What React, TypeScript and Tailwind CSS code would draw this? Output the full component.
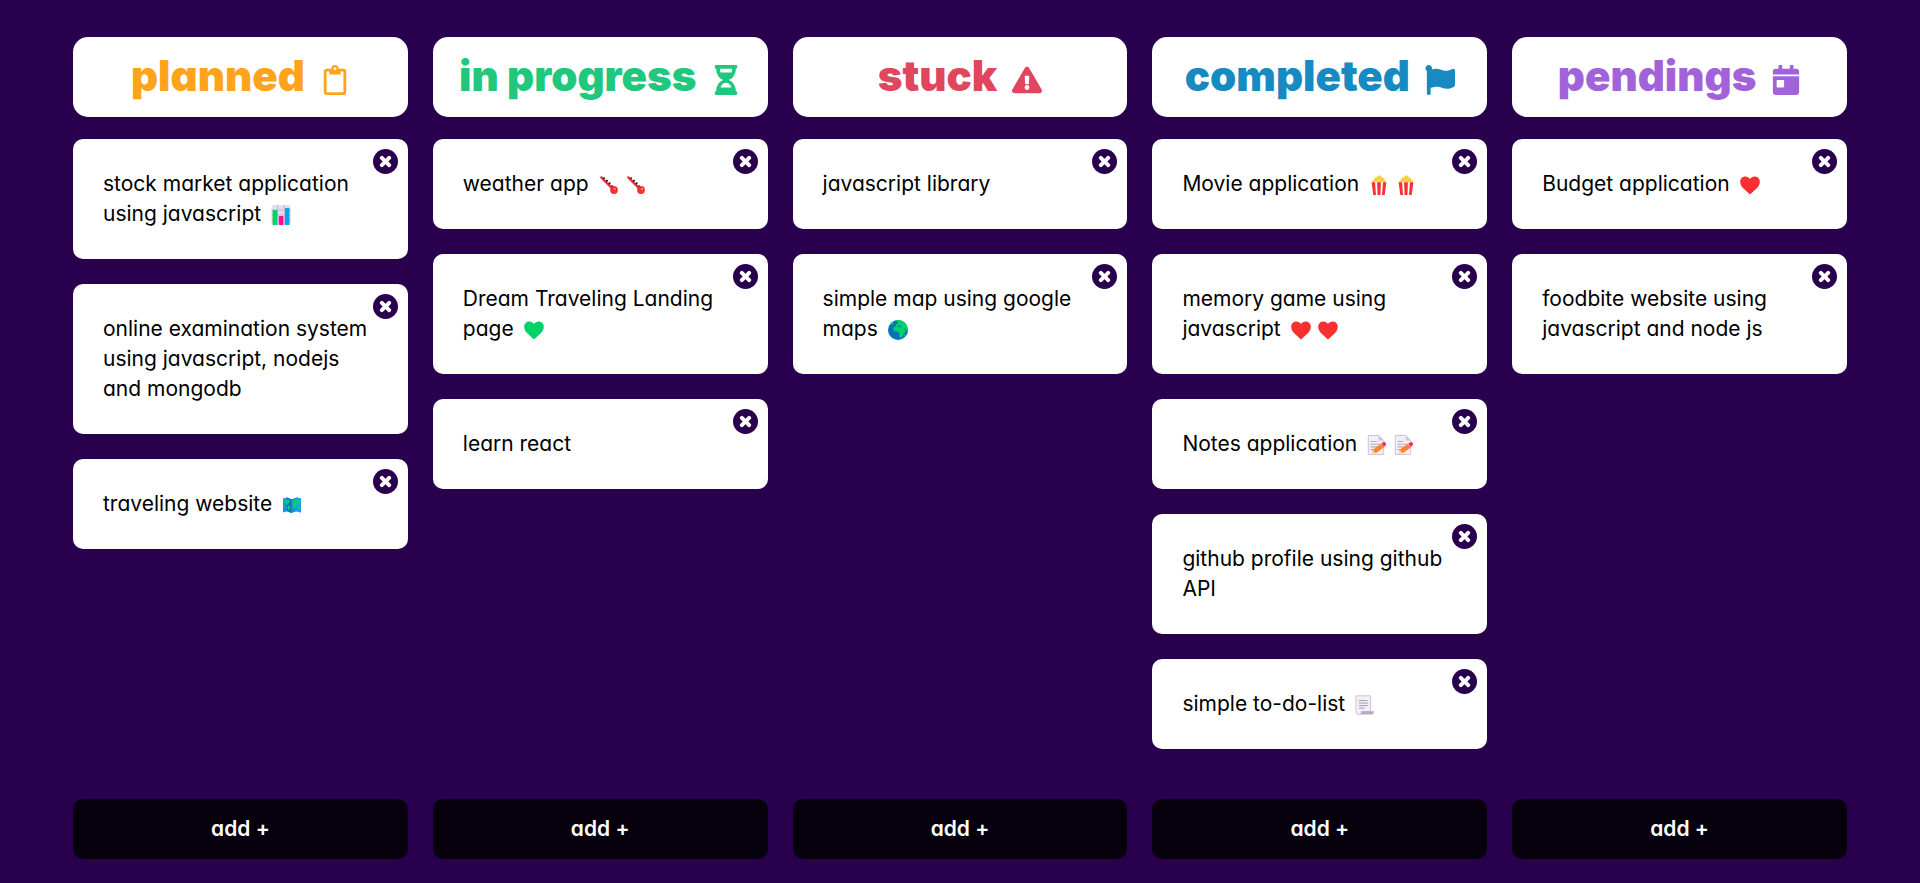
import type { ReactNode } from "react";
import {
  FaCalendarDay,
  FaExclamationTriangle,
  FaFlag,
  FaHourglassHalf,
  FaRegClipboard,
  FaTimes,
} from "react-icons/fa";

type EmojiProps = { label: string; children: ReactNode };

function Emoji({ label, children }: EmojiProps) {
  return (
    <svg role="img" aria-label={label} viewBox="0 0 20 20" className="block size-5">
      {children}
    </svg>
  );
}

function Heart({ green = false }: { green?: boolean }) {
  return (
    <Emoji label={green ? "green heart" : "red heart"}>
      <path
        d="M5.4 1.6C7.4 1.6 9 2.6 10 4c1-1.400 2.600-2.400 4.600-2.400 3 0 5.200 2.200 5.200 5.200 0 2.500-1.100 4.500-3 6.400l-6.200 5.700c-.35.3-.85.3-1.200 0l-6.200-5.700C1.300 11.300.2 9.300.2 6.800c0-3 2.200-5.200 5.200-5.200z"
        fill={green ? "#00d26a" : "#f92f30"}
      />
    </Emoji>
  );
}

function BarChart() {
  return (
    <Emoji label="bar chart">
      <rect x="0.500" y="0" width="19" height="20" rx="2" fill="#e6dbef" />
      <path d="M6.500 0v20M13.400 0v20M.5 5h19M.5 10h19M.5 15h19" stroke="#c6b8cf" strokeWidth="1" />
      <rect x="1.600" y="5" width="4.700" height="15" rx=".7" fill="#00d26a" />
      <rect x="7.800" y="11" width="4.600" height="9" rx=".7" fill="#ff0a92" />
      <rect x="14" y="3" width="4.500" height="17" rx=".7" fill="#00a6ed" />
    </Emoji>
  );
}

function WorldMap() {
  return (
    <Emoji label="world map">
      <path d="M1 3.600 5 2.500 9.500 4.300 14.500 2.500 19 3.600V17.500L14.500 16.300 9.500 18 5 16.300 1 17.500z" fill="#1593df" />
      <path d="M5 2.500 9.500 4.300V18L5 16.300z" fill="#0875b8" />
      <path d="M14.500 2.500 19 3.600V17.500L14.500 16.300z" fill="#10a5ef" />
      <path d="M1.600 5.300 4.500 4.500l2.800.3 1 1.500L6.900 7.800 5.700 10 4 8.700 2 7.500zM6 10.500l2.400 1-.7 2.300-1.200 2.200-.9-3zM10.500 6l2.700-1.700 4.600.5.3 3-2 2.500-1.600-.7-.8 2.800-1.900 2-1-3.200z" fill="#12c77c" />
      <path d="m14.900 12.400 2-.6.8 1.800-1.900.8z" fill="#12c77c" />
    </Emoji>
  );
}

function Thermometer() {
  return (
    <Emoji label="thermometer">
      <path d="m2.500 2.300 12 12" stroke="#f9c4c6" strokeWidth="3" strokeLinecap="round" />
      <path d="m2.300 2.500 12 12" stroke="#ef2f36" strokeWidth="2.300" strokeLinecap="round" />
      <path d="m4.400 3.700 1.200-1.300M7.200 6.500l1.400-1.600M9.900 9.200l1.400-1.600M12.500 11.800l1.200-1.300" stroke="#111" strokeWidth="1.500" />
      <circle cx="15" cy="15" r="3.900" fill="#f8312f" />
      <circle cx="16" cy="14" r="1.200" fill="#ff7a78" />
    </Emoji>
  );
}

function Globe() {
  return (
    <Emoji label="globe showing Europe and Africa">
      <circle cx="10" cy="10" r="10" fill="#0074ba" />
      <path d="M7 .5C8.300.1 9.200 0 10 0c4 0 7 2.200 8.700 5.100l1.300 4.700-.8 1.400-1.200-.9-.8-1.600-1.500-.3 1.200 1.700 1.300.4-1.100 1.500-1.500 1.200-.4 2-1.400 2.200-1.500.5-1-2.400.1-2.300-1.200-1.700-2.700.1-2.200-1.600.3-2.300 1.800-1.300 2.600-.2 1.300.9 2.100.1.500-.8-1.900-.2-1.300-1-1.600 1-1.700-.1.700-1.700 1.900-1.300.1-1.200z" fill="#00d26a" />
      <path d="m1.500 4.800 2.400-2.400 1.800.3-1.200 1.700zM16.200 14.200l1.200-1-.2 2.200-1.200 1z" fill="#00d26a" />
    </Emoji>
  );
}

function Popcorn() {
  return (
    <Emoji label="popcorn">
      <path d="M3.400 8C2.700 6.300 3.600 4.800 5.200 4.500 5.300 2.900 6.600 2 8 2.200 8.500.8 9.300.2 10.200.2s1.800.7 2.200 1.900c1.500-.1 2.600.9 2.600 2.300 1.700.4 2.500 1.900 1.800 3.600z" fill="#fcd53f" />
      <path d="m6 5.600 1.200-1M9 3.500l1.300-1M12.500 5.700l1.200-.9" stroke="#ffb02e" strokeWidth="1" strokeLinecap="round" />
      <path d="M2.600 7.200h14.800L15.700 20H4.300z" fill="#fff" />
      <path d="M2.600 7.200h3.400l1 12.800H4.300zM8.100 7.200h3.800l-.5 12.800H8.600zM14 7.200h3.400L15.700 20H13z" fill="#f8312f" />
    </Emoji>
  );
}

function Memo() {
  return (
    <Emoji label="memo">
      <path d="M1.300.5h10.400l5 5v14H1.300z" fill="#f3eef8" stroke="#cdc4d6" strokeWidth="1" strokeLinejoin="round" />
      <path d="M11.700.3v5.200h5.200z" fill="#cdc4d6" />
      <path d="M3.500 6.500h6M3.500 9.200h10M3.500 11.900h8M3.500 14.600h4" stroke="#b4acbc" strokeWidth="1.100" />
      <path d="m4.800 18.900 1-4.300 2.800 3.400z" fill="#ffce7c" />
      <path d="m5.800 14.700 8.100-5.900 3 3.800-8.200 5.700z" fill="#ff822d" />
      <path d="m14.300 8.500 1.500-1.100c1-.7 2.100-.5 2.800.4.800 1 .7 2.200-.3 2.900l-1.600 1.200z" fill="#f92f60" />
    </Emoji>
  );
}

function Scroll() {
  return (
    <Emoji label="page with curl">
      <path d="M1 .8h14.500v16H6.500c0 1.500-.7 2.600-2.200 2.600C2.500 19.400 1 18.500 1 16.500z" fill="#f3eef8" stroke="#cdc4d6" strokeWidth="1" strokeLinejoin="round" />
      <path d="M6.600 16.200H19c0 2-1 3.400-2.800 3.400H4.500c1.400-.3 2.100-1.500 2.100-3.400z" fill="#b7aabd" />
      <path d="M4 5.600h8.500M4 8.100h9M4 10.600h9M4 13.100h5.500" stroke="#a79bb0" strokeWidth="1" />
    </Emoji>
  );
}

type Task = { text: string; emojis?: ReactNode };

type ColumnData = {
  title: string;
  color: string;
  icon: ReactNode;
  tasks: Task[];
};

const iconClass = "ml-[15px] inline-block h-[30px] w-auto align-[-4px]";

const columns: ColumnData[] = [
  {
    title: "planned",
    color: "text-[#ffa31a]",
    icon: <FaRegClipboard aria-hidden className={iconClass} />,
    tasks: [
      { text: "stock market application using javascript", emojis: <BarChart /> },
      { text: "online examination system using javascript, nodejs and mongodb" },
      { text: "traveling website", emojis: <WorldMap /> },
    ],
  },
  {
    title: "in progress",
    color: "text-[#20c77c]",
    icon: <FaHourglassHalf aria-hidden className={iconClass} />,
    tasks: [
      { text: "weather app", emojis: <><Thermometer /><Thermometer /></> },
      { text: "Dream Traveling Landing page", emojis: <Heart green /> },
      { text: "learn react" },
    ],
  },
  {
    title: "stuck",
    color: "text-[#e0475e]",
    icon: <FaExclamationTriangle aria-hidden className={iconClass} />,
    tasks: [
      { text: "javascript library" },
      { text: "simple map using google maps", emojis: <Globe /> },
    ],
  },
  {
    title: "completed",
    color: "text-[#168ac1]",
    icon: <FaFlag aria-hidden className={iconClass} />,
    tasks: [
      { text: "Movie application", emojis: <><Popcorn /><Popcorn /></> },
      { text: "memory game using javascript", emojis: <><Heart /><Heart /></> },
      { text: "Notes application", emojis: <><Memo /><Memo /></> },
      { text: "github profile using github API" },
      { text: "simple to-do-list", emojis: <Scroll /> },
    ],
  },
  {
    title: "pendings",
    color: "text-[#a162da]",
    icon: <FaCalendarDay aria-hidden className={iconClass} />,
    tasks: [
      { text: "Budget application", emojis: <Heart /> },
      { text: "foodbite website using javascript and node js" },
    ],
  },
];

function TaskCard({ text, emojis }: Task) {
  return (
    <li className="relative rounded-[10px] bg-white p-[30px] text-[21px] leading-[30px] text-black">
      <p>
        {text}
        {emojis && <span className="ml-[10px] inline-flex gap-[7px] align-[-4px]">{emojis}</span>}
      </p>
      <button
        type="button"
        aria-label={`Remove ${text}`}
        className="absolute top-[10px] right-[10px] flex size-[25px] items-center justify-center rounded-full bg-[#29004d] text-white"
      >
        <FaTimes className="size-[15px]" strokeWidth={40} />
      </button>
    </li>
  );
}

function Column({ title, color, icon, tasks }: ColumnData) {
  return (
    <section className="flex min-w-0 flex-col">
      <h2
        className={`h-20 rounded-[15px] bg-white pt-[9px] text-center text-[42px] leading-[60px] font-black whitespace-nowrap ${color}`}
      >
        {title}
        {icon}
      </h2>
      <ul className="mt-[22px] flex flex-1 flex-col gap-[25px] pb-[50px]">
        {tasks.map((task) => (
          <TaskCard key={task.text} {...task} />
        ))}
      </ul>
      <button
        type="button"
        className="h-[60px] rounded-[10px] bg-[#07000d] text-[21px] font-semibold text-white"
      >
        add +
      </button>
    </section>
  );
}

export default function App() {
  return (
    <main className="grid min-h-screen grid-cols-5 gap-[25px] bg-[#29004d] px-[73px] pt-[37px] pb-6 font-['Inter',sans-serif] [font-feature-settings:'cv11']">
      {columns.map((column) => (
        <Column key={column.title} {...column} />
      ))}
    </main>
  );
}
